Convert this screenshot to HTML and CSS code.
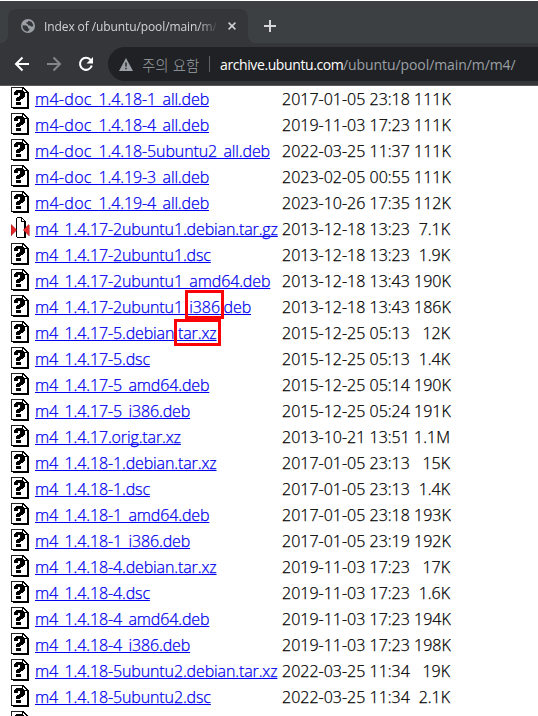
FILE: index.html
```
<!DOCTYPE html>
<html lang="ko">
<head>
<meta charset="utf-8">
<title>Index of /ubuntu/pool/main/m/m4</title>
<link rel="stylesheet" href="styles.css">
</head>
<body>
<svg width="0" height="0" class="defs">
  <symbol id="unknown" viewBox="0 0 20 22" shape-rendering="crispEdges">
    <path fill="#222" d="M1 0h12v1H1zM1 0h1v21H1z"/>
    <path fill="#000" d="M12 0h2v1h1v1h1v1h1v1h1v1h1v17H3v-1H1v-1h11z"/>
    <path fill="#fff" d="M2 1h10v5h5v14H2z"/>
    <path fill="#fff" d="M13 2h1v1h1v1h1v1h-3z"/>
    <path fill="#000" d="M6 3h7v1h1v1h1v5h-1v1h-1v1h-2v1h-1v1H6v-3h1v-1h2V9h1V6H8v2H4V5h1V4h1zM6 15h5v3H6z"/>
  </symbol>
  <symbol id="compressed" viewBox="0 0 20 22" shape-rendering="crispEdges">
    <path fill="#000" d="M7 0h5v1h1v1h1v1h1v1h1v17H7v-1H6V1h1z"/>
    <path fill="#fff" d="M7 1h4v4h3v15H7z"/>
    <path fill="#fff" d="M12 2h1v1h1v1h-2z"/>
    <path fill="#e52a2e" stroke="#9d1010" stroke-width=".5" d="M1 7.500l6 5.500-6 5.500zM19 7.500L13 13l6 5.500z"/>
  </symbol>
</svg>
<header>
  <div class="tabs">
    <div class="tab">
      <svg class="globe" viewBox="0 0 14 14"><circle cx="7" cy="7" r="7" fill="#9aa0a6"/><path fill="#35363a" d="M1.600 6.200l3.600.2 1.800 1.500v1.500l1.500.2-.2 1.500-1.500 1.500C3.600 12.400 1.600 10 1.600 7.500zM7.200 1.800l3.600 1.300 1.500 3.200-.6 1.200-1.700-.1-1.200-1-1.700-.2-.3-1.200-1.600-.4.3-1.300 1.500-.4z"/></svg>
      <span class="title">Index of /ubuntu/pool/main/m/</span>
      <svg class="close" viewBox="0 0 8 8"><path d="M.6.6l6.800 6.800M7.400.6L.6 7.400"/></svg>
    </div>
    <svg class="plus" viewBox="0 0 12 12"><path d="M6 0v12M0 6h12"/></svg>
  </div>
  <div class="toolbar">
    <svg class="nav" viewBox="0 0 16 16"><path d="M15 8H2M8.500 1.500L2 8l6.500 6.500"/></svg>
    <svg class="nav dim" viewBox="0 0 16 16"><path d="M1 8h13M7.500 1.500L14 8l-6.500 6.500"/></svg>
    <svg class="nav" viewBox="0 0 16 16"><path d="M12.800 4.200A6 6 0 1 0 13.800 9.500"/><path class="solid" d="M15 1v6.500H8.500z"/></svg>
    <div class="address">
      <svg class="warn" viewBox="0 0 14 13"><path fill="#9aa0a6" d="M7 0l7 13H0z"/><path fill="#202124" d="M6.300 4.500h1.400v4H6.300zM6.300 9.800h1.400v1.400H6.300z"/></svg>
      <span class="notice">주의 요함</span><i class="rule"></i><span class="host">archive.ubuntu.com</span><span class="path">/ubuntu/pool/main/m/m4/</span>
    </div>
  </div>
</header>
<main id="list"></main>
<script src="list.js"></script>
</body>
</html>
```
FILE: styles.css
```
*, *::before, *::after { box-sizing: border-box; }
body { margin: 0; width: 538px; height: 716px; overflow: hidden; background: #fff; font-family: "Open Sans", "Noto Sans CJK KR", sans-serif; }
.defs { position: absolute; }
header { height: 86px; background: #35363a; border-top: 1px solid #fff; border-bottom: 1px solid #59595d; }
.tabs { display: flex; height: 42px; padding: 8px 0 0 8px; background: #3c4043; }
.tab { display: flex; align-items: center; width: 240px; height: 34px; padding: 0 12px 0 13px; border-radius: 8px 8px 0 0; background: #35363a; position: relative; }
.tab::before, .tab::after { content: ""; position: absolute; bottom: 0; width: 8px; height: 8px; }
.tab::before { left: -8px; background: radial-gradient(circle at 0 0, #3c4043 7.5px, #35363a 8.500px); }
.tab::after { right: -8px; background: radial-gradient(circle at 100% 0, #3c4043 7.5px, #35363a 8.500px); }
.globe { width: 14px; height: 14px; margin-right: 9px; }
.title { width: 172px; white-space: nowrap; font-size: 12px; letter-spacing: -.1px; color: #d0d3d6; -webkit-mask-image: linear-gradient(90deg, #000 154px, transparent 175px); mask-image: linear-gradient(90deg, #000 154px, transparent 175px); }
.close { width: 8px; height: 8px; margin-left: 12px; fill: none; stroke: #d0d3d6; stroke-width: 1.5; }
.plus { width: 12px; height: 12px; margin: 11px 0 0 16px; stroke: #d5d7da; stroke-width: 2; }
.toolbar { display: flex; align-items: center; height: 42px; padding-left: 14px; }
.nav { width: 16px; height: 16px; margin-right: 16px; fill: none; stroke: #fff; stroke-width: 2; }
.nav.dim { stroke: #84868a; }
.nav .solid { fill: #fff; stroke: none; }
.nav:nth-of-type(3) { margin-right: 14px; }
.address { display: flex; align-items: center; flex: 1; height: 34px; padding-left: 11px; border-radius: 17px 0 0 17px; background: #202124; white-space: nowrap; font-size: 14px; }
.warn { width: 14px; height: 13px; margin-right: 9px; }
.notice { width: 60px; color: #9aa0a6; font-family: "Noto Sans CJK KR", sans-serif; font-weight: 300; font-size: 14.500px; }
.rule { width: 1px; height: 16px; margin: 0 10px 0 7px; background: #5f6368; }
.host { width: 123px; color: #fff; letter-spacing: -.4px; }
.path { color: #9aa0a6; letter-spacing: -.08px; }
main { padding: 0 0 0 10px; }
.row { display: grid; grid-template-columns: 25px 247px 132px 36px; height: 26px; align-items: start; color: #000; font-size: 16px; line-height: 26px; white-space: nowrap; font-weight: 300; -webkit-text-stroke: .25px; }
.icon { width: 20px; height: 22px; margin-top: 1px; }
a { color: #00e; text-decoration: underline 1px; text-decoration-skip-ink: none; text-underline-offset: 1px; justify-self: start; letter-spacing: -.12px; }
.doc { letter-spacing: .3px; }
.size { text-align: right; }
.mark { position: relative; }
.mark::after { content: ""; position: absolute; border: 3px solid #fb0207; left: -4px; right: -4px; top: -6px; height: 29px; }
.mark.suffix::after { left: -4px; right: -4px; top: -3px; height: 27px; }
```
FILE: list.js
```
const files = `<span class="doc">m4-doc_</span>1.4.18-1_all.deb|2017-01-05 23:18|111K
<span class="doc">m4-doc_</span>1.4.18-4_all.deb|2019-11-03 17:23|111K
<span class="doc">m4-doc_</span>1.4.18-5ubuntu2_all.deb|2022-03-25 11:37|111K
<span class="doc">m4-doc_</span>1.4.19-3_all.deb|2023-02-05 00:55|111K
<span class="doc">m4-doc_</span>1.4.19-4_all.deb|2023-10-26 17:35|112K
m4_1.4.17-2ubuntu1.debian.tar.gz|2013-12-18 13:23|7.1K
m4_1.4.17-2ubuntu1.dsc|2013-12-18 13:23|1.9K
m4_1.4.17-2ubuntu1_amd64.deb|2013-12-18 13:43|190K
m4_1.4.17-2ubuntu1_<span class="mark">i386</span>.deb|2013-12-18 13:43|186K
m4_1.4.17-5.debian.<span class="mark suffix">tar.xz</span>|2015-12-25 05:13|12K
m4_1.4.17-5.dsc|2015-12-25 05:13|1.4K
m4_1.4.17-5_amd64.deb|2015-12-25 05:14|190K
m4_1.4.17-5_i386.deb|2015-12-25 05:24|191K
m4_1.4.17.orig.tar.xz|2013-10-21 13:51|1.1M
m4_1.4.18-1.debian.tar.xz|2017-01-05 23:13|15K
m4_1.4.18-1.dsc|2017-01-05 23:13|1.4K
m4_1.4.18-1_amd64.deb|2017-01-05 23:18|193K
m4_1.4.18-1_i386.deb|2017-01-05 23:19|192K
m4_1.4.18-4.debian.tar.xz|2019-11-03 17:23|17K
m4_1.4.18-4.dsc|2019-11-03 17:23|1.6K
m4_1.4.18-4_amd64.deb|2019-11-03 17:23|194K
m4_1.4.18-4_i386.deb|2019-11-03 17:23|198K
m4_1.4.18-5ubuntu2.debian.tar.xz|2022-03-25 11:34|19K
m4_1.4.18-5ubuntu2.dsc|2022-03-25 11:34|2.1K
||`;
document.getElementById('list').innerHTML = files.split('\n').map(line => {
  const [name, date, size] = line.split('|');
  const icon = name.endsWith('.gz') ? 'compressed' : 'unknown';
  return `<div class="row"><svg class="icon"><use href="#${icon}"/></svg><a href="#">${name}</a><span>${date}</span><span class="size">${size}</span></div>`;
}).join('');
```
